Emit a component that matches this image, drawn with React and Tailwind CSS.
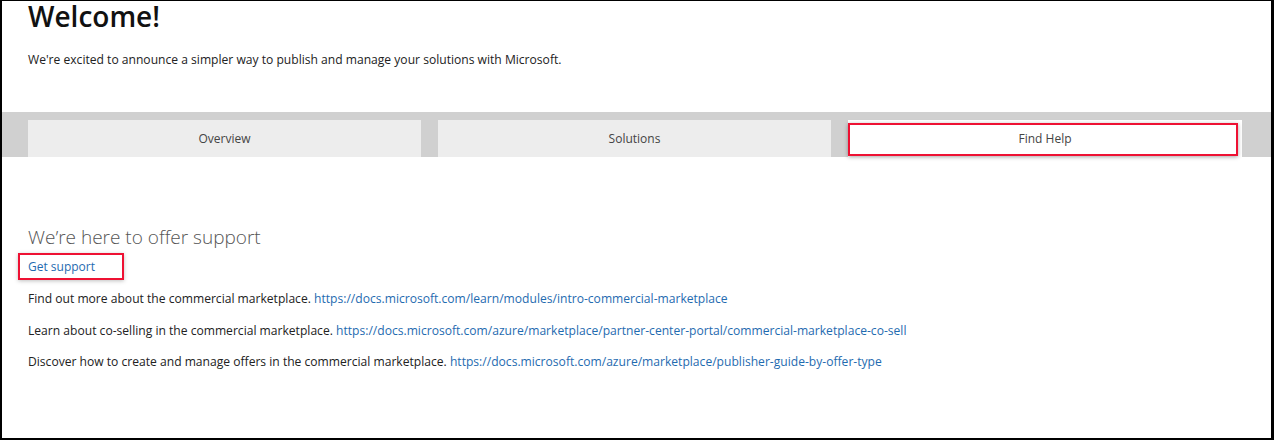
export default function App() {
  const rows = [
    {
      text: "Find out more about the commercial marketplace.",
      url: "https://docs.microsoft.com/learn/modules/intro-commercial-marketplace",
    },
    {
      text: "Learn about co-selling in the commercial marketplace.",
      url: "https://docs.microsoft.com/azure/marketplace/partner-center-portal/commercial-marketplace-co-sell",
    },
    {
      text: "Discover how to create and manage offers in the commercial marketplace.",
      url: "https://docs.microsoft.com/azure/marketplace/publisher-guide-by-offer-type",
    },
  ];

  return (
    <div
      className="w-[1274px] h-[440px] bg-white border-l-2 border-t border-r-[3px] border-b-2 border-black overflow-hidden text-[#222]"
      style={{ fontFamily: '"Segoe UI", "Open Sans", "Noto Sans", sans-serif' }}
    >
      <div className="px-[26px]">
        <h1 className="text-[28px] leading-[30px] font-semibold text-[#111]">Welcome!</h1>
        <p className="text-[12.1px] mt-[20px]">
          We're excited to announce a simpler way to publish and manage your solutions with Microsoft.
        </p>
      </div>

      <div className="mt-[43px] bg-[#d0d0d0] h-[45px] pl-[26px] pt-[8px] flex gap-[17px]">
        <div className="w-[393px] bg-[#ededed] flex items-center justify-center text-[12px] text-[#444]">Overview</div>
        <div className="w-[393px] bg-[#ededed] flex items-center justify-center text-[12px] text-[#444]">Solutions</div>
        <div className="w-[394px] bg-white relative flex items-center justify-center text-[12px] text-[#444]">
          Find Help
          <div className="absolute left-0 right-[4px] top-[3px] bottom-[1px] border-2 border-[#ee1133] shadow-[0_1px_4px_rgba(0,0,0,0.35)]" />
        </div>
      </div>

      <div className="px-[26px] pt-[68px]">
        <h2 className="text-[19px] font-light text-[#555] leading-[24px]">We’re here to offer support</h2>
        <div className="mt-[4px] -ml-[10px] w-[106px] h-[27px] border-2 border-[#ee1133] shadow-[0_1px_4px_rgba(0,0,0,0.25)] flex items-center pl-[8px]">
          <a className="text-[12px] text-[#1f6bb0]">Get support</a>
        </div>
        <div className="mt-[10px] flex flex-col gap-[13.5px]">
          {rows.map((r) => (
            <p key={r.url} className="text-[12.1px] leading-[18px]">
              {r.text} <a className="text-[#1f6bb0]">{r.url}</a>
            </p>
          ))}
        </div>
      </div>
    </div>
  );
}
